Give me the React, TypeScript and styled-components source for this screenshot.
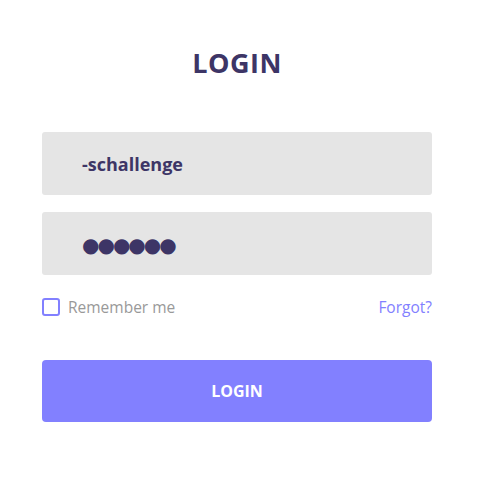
import React from "react";
import styled, { createGlobalStyle } from "styled-components";

const Global = createGlobalStyle`
  html, body { margin: 0; padding: 0; background: #fff; }
  body { font-family: "Open Sans", "Noto Sans", sans-serif; }
`;

const Page = styled.div`
  width: 490px;
  height: 493px;
  box-sizing: border-box;
  padding: 0 58px 0 42px;
`;

const Form = styled.form`
  display: flex;
  flex-direction: column;
  width: 390px;
`;

const Title = styled.h1`
  margin: 44px 0 0;
  height: 38px;
  line-height: 38px;
  text-align: center;
  font-size: 27px;
  font-weight: 700;
  color: #3d3566;
  letter-spacing: 0.5px;
`;

const Fields = styled.div`
  display: flex;
  flex-direction: column;
  gap: 17px;
  margin-top: 50px;
`;

const Field = styled.div`
  height: 63px;
  border-radius: 3px;
  background: #e5e5e5;
  display: flex;
  align-items: center;
  padding-left: 40px;
  color: #3d3566;
  font-weight: 700;
  font-size: 18px;
`;

const Dots = styled.span`
  font-family: "DejaVu Sans", sans-serif;
  font-size: 20px;
  letter-spacing: -2px;
  padding-top: 2px;
`;

const Row = styled.div`
  display: flex;
  align-items: center;
  justify-content: space-between;
  margin-top: 22px;
  height: 20px;
`;

const Remember = styled.label`
  display: flex;
  align-items: center;
  gap: 8px;
  color: #999;
  font-size: 15.5px;
`;

const Box = styled.span`
  width: 18px;
  height: 18px;
  box-sizing: border-box;
  border: 2px solid #8280ff;
  border-radius: 3px;
`;

const Forgot = styled.a`
  color: #8280ff;
  font-size: 15.5px;
  text-decoration: none;
`;

const Button = styled.button`
  margin-top: 43px;
  height: 62px;
  border: none;
  border-radius: 4px;
  background: #8280ff;
  color: #fff;
  font-family: inherit;
  font-size: 16px;
  font-weight: 700;
`;

export default function App() {
  return (
    <Page>
      <Global />
      <Form>
        <Title>LOGIN</Title>
        <Fields>
          <Field>-schallenge</Field>
          <Field>
            <Dots>●●●●●●</Dots>
          </Field>
        </Fields>
        <Row>
          <Remember>
            <Box />
            Remember me
          </Remember>
          <Forgot>Forgot?</Forgot>
        </Row>
        <Button type="button">LOGIN</Button>
      </Form>
    </Page>
  );
}
